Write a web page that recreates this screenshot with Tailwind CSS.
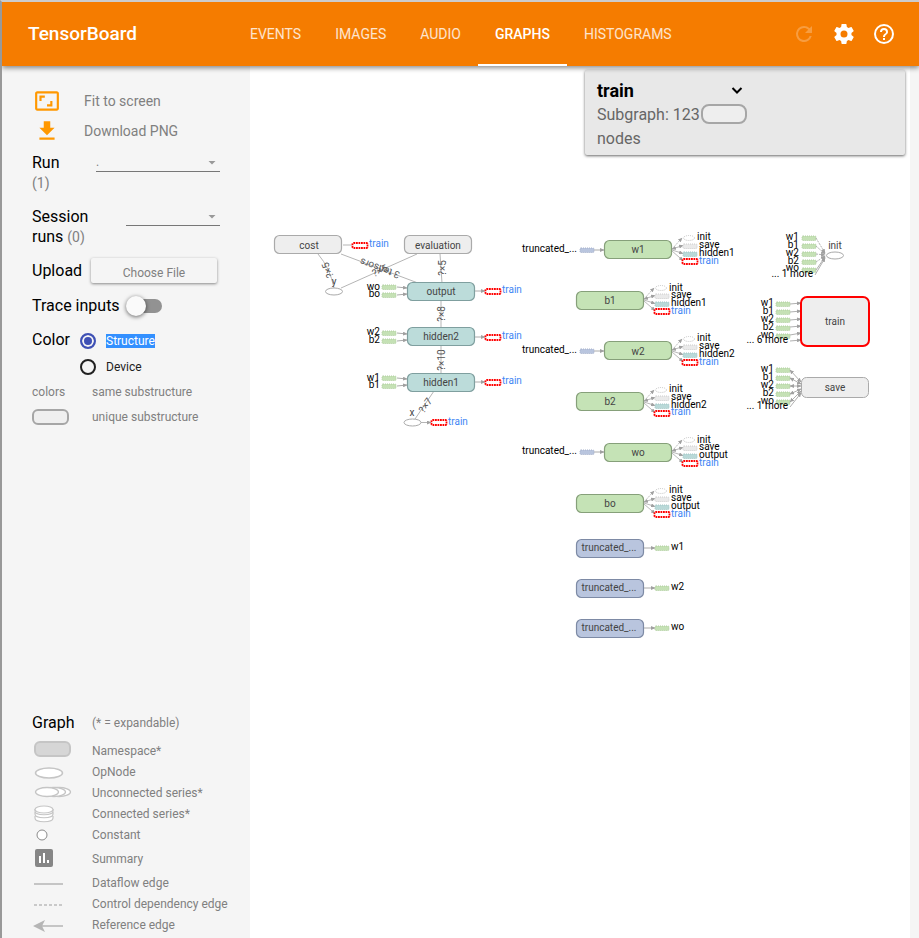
<!DOCTYPE html>
<html lang="en" class="h-full">
<head>
<meta charset="utf-8">
<meta name="viewport" content="width=device-width, initial-scale=1">
<title>TensorBoard</title>
<script src="https://cdn.jsdelivr.net/npm/@tailwindcss/browser@4"></script>
</head>
<body class="flex h-full flex-col overflow-hidden border-l-2 border-t-2 border-l-[#999] border-t-[#ccc] bg-[#f5f5f5] font-['Roboto','Liberation_Sans',sans-serif] text-[#808080]">

<header class="relative z-20 flex h-16 shrink-0 items-center bg-[#f57c00] pr-[23px] pl-[26px] text-white shadow-[0_2px_5px_rgba(0,0,0,0.45)]">
  <h1 class="w-[205px] text-[19px] font-medium">TensorBoard</h1>
  <nav class="flex h-full text-sm text-white/80">
    <a href="#events" class="flex items-center px-[17px]">EVENTS</a>
    <a href="#images" class="flex items-center px-[17px]">IMAGES</a>
    <a href="#audio" class="flex items-center px-[17px]">AUDIO</a>
    <a href="#graphs" class="relative flex items-center px-[17px] font-medium text-white" aria-current="page">GRAPHS<span class="absolute inset-x-0 bottom-0 h-0.5 bg-white"></span></a>
    <a href="#histograms" class="flex items-center px-[17px]">HISTOGRAMS</a>
  </nav>
  <div class="ml-auto flex gap-4">
    <button type="button" aria-label="Reload" class="text-white/25" disabled><svg class="size-6" viewBox="0 0 24 24" fill="currentColor"><path d="M17.65 6.35A7.96 7.96 0 0 0 12 4a8 8 0 1 0 7.73 10h-2.08A6 6 0 1 1 12 6c1.66 0 3.14.69 4.22 1.78L13 11h7V4z"/></svg></button>
    <button type="button" aria-label="Settings"><svg class="size-6" viewBox="0 0 24 24" fill="currentColor"><path d="M19.43 12.98c.04-.32.07-.64.07-.98s-.03-.66-.07-.98l2.11-1.65c.19-.15.24-.42.12-.64l-2-3.46c-.12-.22-.39-.3-.61-.22l-2.49 1c-.52-.4-1.08-.73-1.69-.98l-.38-2.65A.49.49 0 0 0 14 2h-4c-.25 0-.46.18-.49.42l-.38 2.65c-.61.25-1.17.59-1.69.98l-2.49-1c-.23-.09-.49 0-.61.22l-2 3.46c-.13.22-.07.49.12.64l2.11 1.65c-.04.32-.07.65-.07.98s.03.66.07.98l-2.11 1.65c-.19.15-.24.42-.12.64l2 3.46c.12.22.39.3.61.22l2.49-1c.52.4 1.08.73 1.69.98l.38 2.65c.03.24.24.42.49.42h4c.25 0 .46-.18.49-.42l.38-2.65c.61-.25 1.17-.59 1.69-.98l2.49 1c.23.09.49 0 .61-.22l2-3.46c.12-.22.07-.49-.12-.64zM12 15.5a3.5 3.5 0 1 1 0-7 3.5 3.5 0 0 1 0 7z"/></svg></button>
    <button type="button" aria-label="Help"><svg class="size-6" viewBox="0 0 24 24" fill="currentColor"><path d="M11 18h2v-2h-2zm1-16a10 10 0 1 0 0 20 10 10 0 0 0 0-20zm0 18a8 8 0 1 1 0-16 8 8 0 0 1 0 16zm0-14a4 4 0 0 0-4 4h2c0-1.100.9-2 2-2s2 .9 2 2c0 2-3 1.750-3 5h2c0-2.250 3-2.500 3-5a4 4 0 0 0-4-4z"/></svg></button>
  </div>
</header>

<div class="flex min-h-0 flex-1 pr-[9px]">
  <aside class="flex w-[248px] shrink-0 flex-col justify-between overflow-hidden pl-[30px]">
    <div class="pt-5 pr-[30px]">
      <button type="button" class="flex h-[30px] items-center text-sm"><span class="flex w-[52px] pl-0.5"><svg class="size-[26px]" viewBox="0 0 24 24" fill="#ff9800"><path d="M17 12h-2v3h-3v2h5zM7 9h3V7H5v5h2zm14-6H3c-1.100 0-2 .9-2 2v14c0 1.100.9 2 2 2h18c1.100 0 2-.9 2-2V5c0-1.100-.9-2-2-2zm0 16H3V5h18z"/></svg></span>Fit to screen</button>
      <button type="button" class="flex h-[30px] items-center text-sm"><span class="flex w-[52px] pl-0.5"><svg class="size-[26px]" viewBox="0 0 24 24" fill="#ff9800"><path d="M19 9h-4V3H9v6H5l7 7zM5 18v2h14v-2z"/></svg></span>Download PNG</button>

      <div class="mt-[7px] flex items-start">
        <label for="run" class="w-16 text-base leading-5 text-black">Run<br><span class="text-sm leading-5 text-[#808080]">(1)</span></label>
        <span class="relative flex-1 border-b border-[#777]">
          <select id="run" class="block h-[18px] w-full appearance-none text-xs"><option>.</option></select>
          <svg class="pointer-events-none absolute top-2 right-1 h-1 w-2" viewBox="0 0 8 4" fill="#999"><path d="M.5 0h7L4 3.500z"/></svg>
        </span>
      </div>
      <div class="mt-3.5 flex items-start">
        <label for="session" class="w-[94px] text-base leading-5 text-black">Session<br>runs <span class="text-sm leading-5 text-[#808080]">(0)</span></label>
        <span class="relative flex-1 border-b border-[#777]">
          <select id="session" class="block h-[18px] w-full appearance-none text-xs"><option></option></select>
          <svg class="pointer-events-none absolute top-2 right-1 h-1 w-2" viewBox="0 0 8 4" fill="#999"><path d="M.5 0h7L4 3.500z"/></svg>
        </span>
      </div>
      <div class="mt-[11px] flex items-center justify-between pr-[3px]">
        <span id="upload" class="text-base text-black">Upload</span>
        <button type="button" aria-describedby="upload" class="h-[25px] w-[126px] rounded-xs bg-[#f5f5f5] pt-1 text-xs shadow-[0_1px_3px_rgba(0,0,0,0.45)]">Choose File</button>
      </div>
      <label class="mt-[11px] flex h-6 items-center gap-1.5 text-base text-black">Trace inputs
        <span class="relative flex h-5 w-9 items-center"><input type="checkbox" role="switch" class="ml-0.5 h-3.5 w-[34px] appearance-none rounded-full bg-[#929292]"><span class="absolute left-0 size-5 rounded-full bg-[#fafafa] shadow-[0_1px_4px_rgba(0,0,0,0.6)]"></span></span>
      </label>
      <fieldset class="mt-2.5 flex">
        <legend class="float-left w-12 text-base text-black">Color</legend>
        <div class="text-xs text-[#212121]">
          <label class="flex h-[26px] items-center gap-2.5"><input type="radio" name="color" checked class="size-4 appearance-none rounded-full border-2 border-[#3f51b5] bg-[#3f51b5] shadow-[inset_0_0_0_2px_#f5f5f5]"><span class="bg-[#3390ff] leading-[14px] text-white">Structure</span></label>
          <label class="flex h-[26px] items-center gap-2.5"><input type="radio" name="color" class="size-4 appearance-none rounded-full border-2 border-[#212121]"><span>Device</span></label>
        </div>
      </fieldset>
      <div class="flex h-6 items-center text-xs"><span class="w-[60px]">colors</span>same substructure</div>
      <div class="flex h-[25px] items-center text-xs"><span class="w-[60px]"><span class="block h-4 w-[37px] rounded-md border-2 border-[#a6a6a6] bg-[#efefef]"></span></span>unique substructure</div>
    </div>

    <section class="pb-[3px] text-xs">
      <div class="flex h-9 items-center"><h2 class="w-[60px] text-base text-black">Graph</h2>(* = expandable)</div>
      <ul>
        <li class="flex h-5 items-center"><svg class="mr-5 h-5 w-10" viewBox="0 0 40 20"><rect x="3" y="1" width="35" height="14" rx="5" fill="#d6d6d6" stroke="#c5c5c5" stroke-width="2"/></svg>Namespace*</li>
        <li class="flex h-[21px] items-center"><svg class="mr-5 h-5 w-10" viewBox="0 0 40 20"><ellipse cx="17" cy="11" rx="13.500" ry="5" fill="#fff" stroke="#c5c5c5" stroke-width="1.500"/></svg>OpNode</li>
        <li class="flex h-[21px] items-center"><svg class="mr-5 h-5 w-10" viewBox="0 0 40 20" fill="#fff" stroke="#c5c5c5" stroke-width="1.300"><ellipse cx="27" cy="9" rx="11.500" ry="4.500"/><ellipse cx="22" cy="9" rx="11.500" ry="4.500"/><ellipse cx="15" cy="9" rx="11.500" ry="4.500"/></svg>Unconnected series*</li>
        <li class="flex h-[21px] items-center"><svg class="mr-5 h-5 w-10" viewBox="0 0 40 20" fill="#fff" stroke="#c5c5c5" stroke-width="1.200"><path d="M3 12v2c0 5 18 5 18 0v-2M3 8v2c0 5 18 5 18 0V8M3 5v2c0 5 18 5 18 0V5"/><ellipse cx="12" cy="5.500" rx="9" ry="3.500"/></svg>Connected series*</li>
        <li class="flex h-[21px] items-center"><svg class="mr-5 h-5 w-10" viewBox="0 0 40 20"><circle cx="10" cy="10" r="5" fill="#fff" stroke="#8a8a8a"/></svg>Constant</li>
        <li class="flex h-[27px] items-center"><svg class="mr-5 h-5 w-10" viewBox="0 0 40 20"><rect x="3" y="0" width="18" height="18" rx="2" fill="#868686"/><path d="M8 7v7M12 4v10M16 11v3" stroke="#fff" stroke-width="2"/></svg>Summary</li>
        <li class="flex h-[21px] items-center"><svg class="mr-5 h-5 w-10" viewBox="0 0 40 20"><path d="M2 11h29" stroke="#c5c5c5" stroke-width="2"/></svg>Dataflow edge</li>
        <li class="flex h-[21px] items-center"><svg class="mr-5 h-5 w-10" viewBox="0 0 40 20"><path d="M2 11h28" stroke="#bbb" stroke-width="1.500" stroke-dasharray="3 2"/></svg>Control dependency edge</li>
        <li class="flex h-[21px] items-center"><svg class="mr-5 h-5 w-10" viewBox="0 0 40 20"><path d="M10 11h21" stroke="#c5c5c5" stroke-width="2"/><path d="M1 11l12-6-3 6 3 6z" fill="#b5b5b5"/></svg>Reference edge</li>
      </ul>
    </section>
  </aside>

  <main class="relative min-w-0 flex-1 bg-white">
    <svg class="h-full w-full text-[10px]" role="img" aria-label="Computation graph">
      <defs>
        <marker id="arrow" markerUnits="userSpaceOnUse" markerWidth="5" markerHeight="4" refX="4" refY="2" orient="auto-start-reverse"><path d="M0 0l4.500 2-4.500 2z" fill="#a0a0a0"/></marker>
        <rect id="node" x="-33.500" y="-9.500" width="67" height="18" rx="5" stroke-width="1.200"/>
        <g id="chip"><rect x="-7" y="-2" width="14" height="4.500" rx="1"/></g>
        <g id="redchip"><rect x="-7.500" y="-2" width="15" height="5" rx="1" fill="#fff" stroke="#f00" stroke-width="1.800" stroke-dasharray="1.800 .7"/></g>
        <g id="outs">
          <g stroke="#b0b0b0" stroke-width=".9" fill="none"><path d="M34 -1L44 -12" stroke-dasharray="2 1" marker-end="url(#arrow)"/><path d="M34 -1L45 -4.500" marker-start="url(#arrow)" marker-end="url(#arrow)"/><path d="M34 0L45 3.500" marker-end="url(#arrow)"/><path d="M34 1L45 10.500" marker-end="url(#arrow)"/></g>
          <ellipse cx="51" cy="-12" rx="5.500" ry="2.500" fill="#fff" stroke="#c4c4c4" stroke-dasharray="1 1"/>
          <use href="#chip" x="52" y="-4" fill="#eaeaea" stroke="#ccc" stroke-dasharray="1 1"/>
          <use href="#chip" x="52" y="4" fill="#b9d9d8" stroke="#a2c5c4" stroke-dasharray="1 1"/>
          <use href="#redchip" x="52" y="11"/>
        </g>
        <g id="blue-in"><path d="M-44 0H-34" stroke="#aaa" marker-end="url(#arrow)"/><use href="#chip" x="-51" fill="#b9c5de" stroke="#a5b0ca" stroke-dasharray="1 1"/></g>
        <g id="layer-io">
          <g stroke="#aaa"><path d="M-44 -4L-34 -3" marker-end="url(#arrow)"/><path d="M-44 4L-34 3" marker-end="url(#arrow)"/><path d="M34 0H44" marker-end="url(#arrow)"/></g>
          <g fill="#c5e1b5" stroke="#b0cea0" stroke-dasharray="1 1"><use href="#chip" x="-52" y="-4"/><use href="#chip" x="-52" y="4"/></g>
          <use href="#redchip" x="52"/>
        </g>
        <g id="five-chips" fill="#c5e1b5" stroke="#b0cea0" stroke-dasharray="1 1"><use href="#chip"/><use href="#chip" y="8"/><use href="#chip" y="16"/><use href="#chip" y="24"/><use href="#chip" y="32"/></g>
      </defs>

      <g transform="translate(-250 -66)">
        <!-- main edges -->
        <g stroke="#b5b5b5" fill="none">
          <path d="M318 254Q330 268 334 288M341 254L418 283M417 254L341 288M440 254L442 283M441 300V328M441 346V374M434 391L415 419"/>
          <path d="M343 245H352M421 422.500H431" marker-end="url(#arrow)"/>
        </g>
        <g fill="#555" text-anchor="middle">
          <text transform="translate(328 270) rotate(-112)" y="3">?×5</text>
          <text transform="translate(380 268) rotate(-160)" y="3">3 tensors</text>
          <text transform="translate(380 271) rotate(-24)" y="3">?×5</text>
          <text transform="translate(442 268) rotate(-90)" y="4">?×5</text>
          <text transform="translate(441 314) rotate(-90)" y="4">?×8</text>
          <text transform="translate(441 360) rotate(-90)" y="4">?×10</text>
          <text transform="translate(425 405) rotate(-55)" y="4">?×7</text>
        </g>

        <g fill="#eee" stroke="#aaa"><use href="#node" x="308" y="245"/><use href="#node" x="438" y="245"/></g>
        <g fill="#bcdcda" stroke="#7f9f9f"><use href="#node" x="441" y="292"/><use href="#node" x="441" y="337"/><use href="#node" x="441" y="383"/></g>
        <use href="#layer-io" x="441" y="291"/><use href="#layer-io" x="441" y="337"/><use href="#layer-io" x="441" y="382"/>
        <use href="#redchip" x="360" y="245"/><use href="#redchip" x="439" y="422"/>
        <g fill="#fff" stroke="#aaa"><ellipse cx="334" cy="291.500" rx="8.500" ry="3.500"/><ellipse cx="412.500" cy="422.500" rx="8.500" ry="3.500"/></g>
        <g fill="#444" text-anchor="middle">
          <text x="309" y="249">cost</text><text x="438" y="249">evaluation</text><text x="441" y="295">output</text><text x="441" y="340">hidden2</text><text x="441" y="386">hidden1</text>
          <text x="334" y="285">y</text><text x="412" y="416">x</text>
        </g>
        <g fill="#000" text-anchor="end">
          <text x="380" y="290">wo</text><text x="380" y="297">bo</text><text x="380" y="335">w2</text><text x="380" y="343">b2</text><text x="380" y="381">w1</text><text x="380" y="388">b1</text>
        </g>
        <g fill="#4285f4"><text x="369" y="247">train</text><text x="502" y="293">train</text><text x="502" y="339">train</text><text x="502" y="384">train</text><text x="448" y="425">train</text></g>

        <!-- variables -->
        <g fill="#c5e3b6" stroke="#86a07a">
          <use href="#node" x="638" y="250"/><use href="#node" x="610" y="301"/><use href="#node" x="638" y="351"/><use href="#node" x="610" y="402"/><use href="#node" x="638" y="453"/><use href="#node" x="610" y="504"/>
        </g>
        <use href="#outs" x="638" y="250"/><use href="#outs" x="610" y="300"/><use href="#outs" x="638" y="351"/><use href="#outs" x="610" y="402"/><use href="#outs" x="638" y="452"/><use href="#outs" x="610" y="503"/>
        <use href="#blue-in" x="638" y="250"/><use href="#blue-in" x="638" y="351"/><use href="#blue-in" x="638" y="452"/>
        <g fill="#444" text-anchor="middle"><text x="638" y="253">w1</text><text x="610" y="304">b1</text><text x="638" y="355">w2</text><text x="610" y="405">b2</text><text x="638" y="456">wo</text><text x="610" y="507">bo</text></g>
        <g fill="#000" text-anchor="end"><text x="577" y="252">truncated_...</text><text x="577" y="353">truncated_...</text><text x="577" y="454">truncated_...</text></g>
        <g fill="#000">
          <text x="697" y="240">init</text><text x="699" y="248">save</text><text x="699" y="256">hidden1</text>
          <text x="669" y="291">init</text><text x="671" y="298">save</text><text x="671" y="306">hidden1</text>
          <text x="697" y="341">init</text><text x="699" y="349">save</text><text x="699" y="357">hidden2</text>
          <text x="669" y="392">init</text><text x="671" y="400">save</text><text x="671" y="408">hidden2</text>
          <text x="697" y="443">init</text><text x="699" y="450">save</text><text x="699" y="458">output</text>
          <text x="669" y="493">init</text><text x="671" y="501">save</text><text x="671" y="509">output</text>
        </g>
        <g fill="#4285f4"><text x="699" y="264">train</text><text x="671" y="314">train</text><text x="699" y="365">train</text><text x="671" y="415">train</text><text x="699" y="466">train</text><text x="671" y="517">train</text></g>

        <!-- initialisers -->
        <g fill="#b9c5de" stroke="#7d8aa5"><use href="#node" x="610" y="549"/><use href="#node" x="610" y="589"/><use href="#node" x="610" y="629"/></g>
        <g fill="#444" text-anchor="middle"><text x="609" y="551">truncated_...</text><text x="609" y="591">truncated_...</text><text x="609" y="631">truncated_...</text></g>
        <g stroke="#aaa"><path d="M644 548H655" marker-end="url(#arrow)"/><path d="M644 588H655" marker-end="url(#arrow)"/><path d="M644 628H655" marker-end="url(#arrow)"/></g>
        <g fill="#c5e1b5" stroke="#b0cea0" stroke-dasharray="1 1"><use href="#chip" x="662" y="548"/><use href="#chip" x="662" y="588"/><use href="#chip" x="662" y="628"/></g>
        <g fill="#000"><text x="671" y="550">w1</text><text x="671" y="590">w2</text><text x="671" y="630">wo</text></g>

        <!-- auxiliary nodes -->
        <use href="#five-chips" x="809" y="238"/><use href="#five-chips" x="783" y="304"/><use href="#five-chips" x="783" y="370"/>
        <g stroke="#b0b0b0" fill="none">
          <g stroke-dasharray="2 1"><path d="M816 238L825 253" marker-end="url(#arrow)"/><path d="M816 246L825 254" marker-end="url(#arrow)"/><path d="M816 254L825 255" marker-end="url(#arrow)"/><path d="M816 262L825 256" marker-end="url(#arrow)"/></g>
          <path d="M816 270L825 257" marker-end="url(#arrow)"/><path d="M815 275L825 258" marker-end="url(#arrow)"/>
          <path d="M790 304L801 303" marker-end="url(#arrow)"/><path d="M790 312L801 311" marker-end="url(#arrow)"/><path d="M790 320L801 319" marker-end="url(#arrow)"/><path d="M790 327L801 326" marker-end="url(#arrow)"/><path d="M790 335L801 333" marker-end="url(#arrow)"/><path d="M790 341L801 340" marker-end="url(#arrow)"/>
          <g><path d="M790 370L801 382" marker-start="url(#arrow)" marker-end="url(#arrow)"/><path d="M790 378L801 384" marker-start="url(#arrow)" marker-end="url(#arrow)"/><path d="M790 386L801 386" marker-start="url(#arrow)" marker-end="url(#arrow)"/><path d="M790 394L801 389" marker-start="url(#arrow)" marker-end="url(#arrow)"/><path d="M790 402L801 391" marker-start="url(#arrow)" marker-end="url(#arrow)"/><path d="M790 407L801 393" marker-end="url(#arrow)"/></g>
        </g>
        <ellipse cx="835" cy="255.500" rx="8.500" ry="3.500" fill="#fff" stroke="#aaa"/>
        <rect x="801" y="297" width="68" height="49" rx="6" fill="#eee" stroke="#f00" stroke-width="2"/>
        <rect x="801.500" y="377.500" width="67" height="20" rx="5" fill="#eee" stroke="#aaa"/>
        <g fill="#444" text-anchor="middle"><text x="835" y="249">init</text><text x="835" y="325">train</text><text x="835" y="391">save</text></g>
        <g fill="#000" text-anchor="end">
          <text x="799" y="240">w1</text><text x="799" y="248">b1</text><text x="799" y="256">w2</text><text x="799" y="264">b2</text><text x="799" y="271">wo</text><text x="813" y="277">... 1 more</text>
          <text x="774" y="306">w1</text><text x="774" y="314">b1</text><text x="774" y="322">w2</text><text x="774" y="330">b2</text><text x="774" y="338">wo</text><text x="788" y="343">... 6 more</text>
          <text x="774" y="372">w1</text><text x="774" y="380">b1</text><text x="774" y="388">w2</text><text x="774" y="396">b2</text><text x="774" y="404">wo</text><text x="788" y="409">... 1 more</text>
        </g>
      </g>
    </svg>

    <section class="absolute top-1 right-[5px] w-80 rounded-xs bg-[#e8e8e8] px-3 pt-[9px] pb-1 text-base text-[#666] shadow-[0_1px_3px_rgba(0,0,0,0.6)]">
      <div class="flex h-6 w-[150px] items-center justify-between">
        <h2 class="text-lg font-bold text-black">train</h2>
        <button type="button" aria-label="Toggle details" class="p-1"><svg class="h-2.5 w-3" viewBox="0 0 12 10" fill="none" stroke="#000" stroke-width="2"><path d="M1.500 2L6 6.500 10.500 2"/></svg></button>
      </div>
      <div class="flex h-6 items-center gap-px">Subgraph: 123<span class="mb-0.5 h-5 w-[46px] rounded-lg border-2 border-[#a6a6a6] bg-[#eee]"></span></div>
      <div class="h-6">nodes</div>
    </section>
  </main>
</div>
</body>
</html>
